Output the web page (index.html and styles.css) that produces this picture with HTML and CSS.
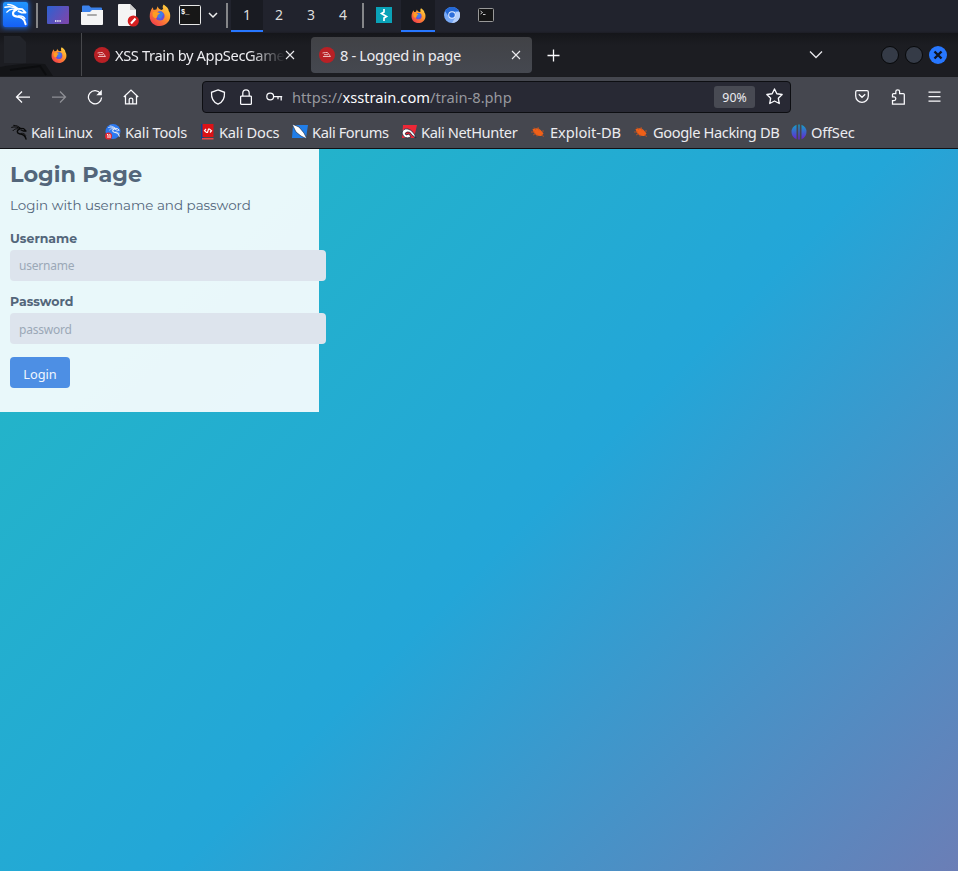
FILE: index.html
```html
<!DOCTYPE html>
<html lang="en">
<head>
<meta charset="utf-8">
<title>8 - Logged in page</title>
<link rel="stylesheet" href="styles.css">
</head>
<body>
<svg width="0" height="0" class="defs" aria-hidden="true">
  <defs>
    <linearGradient id="kali" x1="0" y1="0" x2="0" y2="1"><stop offset="0" stop-color="#2196ff"/><stop offset="1" stop-color="#1560f5"/></linearGradient>
    <linearGradient id="desk" x1="0" y1="0" x2="1" y2="0.6"><stop offset="0" stop-color="#2b62d2"/><stop offset="1" stop-color="#7748ae"/></linearGradient>
    <linearGradient id="fire" x1="1" y1="0" x2="0.2" y2="1"><stop offset="0" stop-color="#ffe14a"/><stop offset=".45" stop-color="#ff9a2b"/><stop offset="1" stop-color="#f23a4c"/></linearGradient>
    <linearGradient id="off" gradientUnits="userSpaceOnUse" x1="0" y1="0" x2="0" y2="16"><stop offset="0" stop-color="#12a5c8"/><stop offset="1" stop-color="#6a1fd0"/></linearGradient>
    <symbol id="dragon" viewBox="0 0 24 24">
      <g fill="none" stroke="currentColor" stroke-linecap="round" stroke-linejoin="round">
        <path stroke-width="1.500" d="M4 2C8 2 11 3.500 14 6M1 5C6 3.500 10 4.500 14 7M3 10C6 6.500 10 6.500 13 8"/>
        <path stroke-width="1.900" d="M13 6.500L19 7L22.500 10.500L18.500 10.500L15 9"/>
        <path stroke-width="2.200" d="M12 8C8.500 9.500 8.500 14 12.500 14.500C17 15 21.500 16 22.500 22.500"/>
        <path stroke-width="1.200" d="M15 14C19 13.500 21 15 22 17"/>
      </g>
    </symbol>
    <symbol id="firefox" viewBox="0 0 24 24">
      <path fill="url(#fire)" d="M16 .5C21 4 21.500 6 21.500 7.500C23 9 23.500 12 23 15C22 20 17.500 24 12 24C5.500 24 .8 19.500 .8 13.500C.8 9.500 2 6.500 4 3.500L5 6.500L8 6L9.500 2.500C10 4.500 11 5.500 13.500 6.500L15.500 5.500C14.500 3.500 15 2 16 .5Z"/>
      <circle cx="12" cy="13" r="5" fill="#6a4fd8"/>
      <path fill="#3d7fe8" d="M9 10L13 7.500L16 11L13 16L10 15Z"/>
      <path fill="#ff9d22" d="M4 9C7 7 9 9 12 10.300L9.500 12L9 14C8 17 5 15 4 13Z"/>
    </symbol>
    <symbol id="train" viewBox="0 0 16 16">
      <circle cx="8" cy="8" r="8" fill="#b92025"/>
      <path d="M3.500 6L6.500 5.500H8.500L11.500 9.500H4M5 7.700H9" fill="none" stroke="#ecb9ba"/>
    </symbol>
    <symbol id="bug" viewBox="0 0 16 16">
      <path d="M2.500 5L5 4.500L7 4.200C9.500 4.500 12 7 13.500 9.500L11.500 12C8 12.500 5 11 3.500 8Z" fill="#f06018"/>
      <path d="M1 8H5M3 11L6 9.500M4 3.500L6 6M8 3L9 6.500M12 7L14 7M7 10.500V12.500M11 11L14 12.500" fill="none" stroke="#c65320" stroke-width=".8"/>
    </symbol>
    <symbol id="x" viewBox="0 0 10 10"><path d="M1 1L9 9M9 1L1 9" fill="none" stroke="currentColor" stroke-width="1.100"/></symbol>
  </defs>
</svg>

<header class="panel">
  <span class="kali"><svg width="25" height="25" viewBox="0 0 26 26"><rect width="26" height="26" rx="2" fill="url(#kali)"/><use href="#dragon" x="1" y="0" width="24" height="25"/></svg></span>
  <i class="sep sep-1"></i>
  <svg class="desk" width="22" height="18" viewBox="0 0 22 18"><rect width="22" height="18" rx="1" fill="url(#desk)"/><path d="M8 15H14" stroke="#fff" stroke-width="1.600" stroke-dasharray="1.400 .8"/></svg>
  <svg class="folder" width="22" height="20" viewBox="0 0 22 20"><path d="M1 8V1.500Q1 .5 2 .5H8L10 2.500H20Q21 2.500 21 3.500V8Z" fill="#3b82ec"/><path d="M0 7H9L11 5H22V19Q22 20 21 20H1Q0 20 0 19Z" fill="#f4f4f4"/><rect x="6" y="9" width="10" height="2" rx="1" fill="#a9a9a9"/></svg>
  <svg class="note" width="21" height="23" viewBox="0 0 21 23"><path d="M1 0H12L18 6V22H1Q0 22 0 21V1Q0 0 1 0Z" fill="#f4f4f4"/><path d="M12 0L18 6H12Z" fill="#cfcfcf"/><circle cx="15.300" cy="17" r="5.600" fill="#d61f20"/><path d="M13 19.500L17.500 14.500" stroke="#fff" stroke-width="2"/></svg>
  <svg class="ff" width="22" height="22"><use href="#firefox"/></svg>
  <svg class="term" width="22" height="20" viewBox="0 0 22 20"><rect x=".5" y=".5" width="21" height="19" rx="1" fill="#171717" stroke="#e8e8e8"/><text x="2" y="9" class="prompt">$_</text></svg>
  <svg class="drop" width="10" height="8" viewBox="0 0 10 8"><path d="M1 2L5 6L9 2" fill="none" stroke="#eee" stroke-width="1.500"/></svg>
  <i class="sep sep-2"></i>
  <nav class="spaces"><span class="on">1</span><span>2</span><span>3</span><span>4</span></nav>
  <i class="sep sep-3"></i>
  <svg class="burp" width="16" height="16" viewBox="0 0 16 16"><rect width="16" height="16" fill="#0aa2b8"/><path d="M8 2V5L5.500 6.500L10.500 9.500L8 11V14" fill="none" stroke="#fff" stroke-width="1.700"/></svg>
  <span class="task"><svg width="15" height="15"><use href="#firefox"/></svg></span>
  <svg class="chromium" width="16" height="16" viewBox="0 0 16 16"><circle cx="8" cy="8" r="8" fill="#78aaf8"/><path d="M1 4A8 8 0 0 1 15 4L8 5L5 10Z" fill="#2468d5"/><path d="M15.500 5A8 8 0 0 1 8 16L12 9V5Z" fill="#b5cffb"/><circle cx="8" cy="8" r="3.800" fill="#e8f0ff"/><circle cx="8" cy="8" r="2.800" fill="#2d6edb"/></svg>
  <svg class="term-2" width="16" height="14" viewBox="0 0 16 14"><rect x=".5" y=".5" width="15" height="13" rx="1" fill="#151515" stroke="#999"/><path d="M2.500 3L4.500 4.500L2.500 6M5 6.500H7.500" fill="none" stroke="#ddd" stroke-width=".9"/></svg>
</header>

<div class="tabs">
  <div class="pinned">
    <svg class="ghost" width="81" height="43" viewBox="0 0 81 43"><path d="M4 3H20L26 9V30H4Z" fill="#22242a"/><path d="M0 34Q25 29 45 31L53 43H0Z" fill="#131417"/><path d="M10 37L40 33L46 42" fill="none" stroke="#0c0d0f" stroke-width="2"/></svg>
    <svg class="pin-icon" width="16" height="16"><use href="#firefox"/></svg>
  </div>
  <div class="tab"><svg width="16" height="16"><use href="#train"/></svg><span class="tab-title fade">XSS Train by AppSecGame</span><svg class="close" width="10" height="10"><use href="#x"/></svg></div>
  <div class="tab active"><svg width="16" height="16"><use href="#train"/></svg><span class="tab-title">8 - Logged in page</span><svg class="close" width="10" height="10"><use href="#x"/></svg></div>
  <svg class="plus" width="13" height="13" viewBox="0 0 13 13"><path d="M6.500 .5V12.500M.5 6.500H12.500" stroke="#fbfbfe" stroke-width="1.300"/></svg>
  <svg class="all-tabs" width="14" height="9" viewBox="0 0 14 9"><path d="M1 1.500L7 7.500L13 1.500" fill="none" stroke="#e8e8ec" stroke-width="1.300"/></svg>
  <div class="wm"><i></i><i></i><i class="wm-close"><svg width="10" height="10" viewBox="0 0 10 10"><path d="M1.500 1.500L8.500 8.500M8.500 1.500L1.500 8.500" stroke="#101522" stroke-width="2.400"/></svg></i></div>
</div>

<div class="toolbar">
  <svg class="nav back" width="16" height="16" viewBox="0 0 16 16"><path d="M15 8H1.500M7 2.500L1.500 8L7 13.500"/></svg>
  <svg class="nav fwd" width="16" height="16" viewBox="0 0 16 16"><path d="M1 8H14.500M9 2.500L14.500 8L9 13.500"/></svg>
  <svg class="nav reload" width="16" height="16" viewBox="0 0 16 16"><path d="M13.500 4.500A6.600 6.600 0 1 0 14.600 8.500"/><path class="solid" d="M14.800 .8V6.300H9.300Z"/></svg>
  <svg class="nav home" width="16" height="16" viewBox="0 0 16 16"><path d="M.8 8L8 1L15.200 8M2.500 7V14.800H13.500V7M6.200 14.500V10.500Q6.200 9.200 8 9.200T9.800 10.500V14.500"/></svg>
  <div class="url">
    <svg class="nav" width="16" height="16" viewBox="0 0 16 16"><path d="M8 .8L14.500 3.300C14.800 9 12.500 13.500 8 15.200C3.500 13.500 1.200 9 1.500 3.300Z"/></svg>
    <svg class="nav lock" width="12" height="16" viewBox="0 0 12 16"><path d="M1.500 7H10.500Q11.400 7 11.400 8V14.300Q11.400 15.300 10.500 15.300H1.500Q.6 15.300 .6 14.300V8Q.6 7 1.500 7ZM2.800 7V4A3.200 3.200 0 0 1 9.200 4V7"/></svg>
    <svg class="nav key" width="17" height="10" viewBox="0 0 17 10"><circle cx="4.200" cy="4.500" r="3.400"/><path d="M7.600 4.500H16.200M12 4.500V7.300M15.200 4.500V8.500"/></svg>
    <span class="addr">https://<b>xsstrain.com</b>/train-8.php</span>
    <span class="zoom">90%</span>
    <svg class="nav star" width="17" height="17" viewBox="0 0 16 16"><path stroke-linejoin="round" d="M8 .9L10.200 5.400L15.200 6.100L11.600 9.600L12.500 14.600L8 12.200L3.500 14.600L4.400 9.600L.8 6.100L5.800 5.400Z"/></svg>
  </div>
  <svg class="nav pocket" width="14" height="13" viewBox="0 0 14 13"><path d="M2 .7H12Q13.300 .7 13.300 2V6A6.300 6.300 0 0 1 .7 6V2Q.7 .7 2 .7ZM3.800 4.300L7 7.300L10.200 4.300"/></svg>
  <svg class="nav ext" width="14" height="16" viewBox="0 0 14 16"><path d="M4.800 4.500V2.500Q4.800 .8 6.700 .8T8.600 2.500V4.500H12.300Q13.300 4.500 13.300 5.500V15.200H1.500V11.500H3Q4.800 11.500 4.800 9.700T3 7.900H1.500V5.500Q1.500 4.500 2.500 4.500Z"/></svg>
  <svg class="nav menu" width="13" height="11" viewBox="0 0 13 11"><path d="M.5 1H12.500M.5 5.500H12.500M.5 10H12.500"/></svg>
</div>

<nav class="bookmarks">
  <a class="b1"><svg class="dark" width="16" height="16"><use href="#dragon"/></svg><span>Kali Linux</span></a>
  <a class="b2"><svg width="16" height="16" viewBox="0 0 16 16"><circle cx="8" cy="7.500" r="7.500" fill="#2b78f0"/><use href="#dragon" x="3" y="1" width="12" height="12"/><circle cx="3.500" cy="12" r="3.500" fill="#e32631"/><path d="M2 10.500H3V14M4.500 10.500H5V14" fill="none" stroke="#fff"/></svg><span>Kali Tools</span></a>
  <a class="b3"><svg width="13" height="16" viewBox="0 0 13 16"><path d="M0 0H3V15H0Z" fill="#123f8c"/><path d="M1.500 0H12.500V13H1.500Z" fill="#dc1216"/><path d="M1 14H12.500V15.500H1Z" fill="#f24848"/><path d="M5 5L3.500 6.700L5.500 8.500H6.500L7.500 5H8.500L10.500 6.700L9 8.500" fill="none" stroke="#fff" stroke-width="1.200"/></svg><span>Kali Docs</span></a>
  <a class="b4"><svg width="16" height="16" viewBox="0 0 16 16"><path d="M1 1H16L14 14H0Z" fill="#217ee8"/><path d="M0 0L7 3L12 9L15 15L9 12L4 8Z" fill="#fff" stroke="#182236" stroke-width=".6"/></svg><span>Kali Forums</span></a>
  <a class="b5"><svg width="16" height="16" viewBox="0 0 16 16"><path d="M2 1H16L13 14H1Z" fill="#ed2736"/><path d="M1 9Q2 4 7 5Q13 7 15 14L11 11Q9 7 6 8Q3 9 5 11L8 10L10 13Q3 16 1 9Z" fill="#fff" stroke="#182236" stroke-width=".8"/></svg><span>Kali NetHunter</span></a>
  <a class="b6"><svg width="16" height="16"><use href="#bug"/></svg><span>Exploit-DB</span></a>
  <a class="b7"><svg width="16" height="16"><use href="#bug"/></svg><span>Google Hacking DB</span></a>
  <a class="b8"><svg width="16" height="16" viewBox="0 0 16 16"><path fill="url(#off)" d="M5.500 .8V15.200A7.700 7.700 0 0 1 5.500 .8ZM7.300 .5H8.700V15.500H7.300ZM10.500 .8A7.700 7.700 0 0 1 10.500 15.200Z"/></svg><span>OffSec</span></a>
</nav>

<main class="page">
  <form class="card">
    <h1>Login Page</h1>
    <p>Login with username and password</p>
    <label for="u">Username</label>
    <input id="u" type="text" placeholder="username">
    <label for="p">Password</label>
    <input id="p" class="lower" type="password" placeholder="password">
    <button type="button">Login</button>
  </form>
</main>
</body>
</html>
```

FILE: styles.css
```css
* { box-sizing: border-box; }
body { margin: 0; height: 871px; overflow: hidden; display: flex; flex-direction: column; background: #191a1f; font-family: "Noto Sans", sans-serif; color: #ececf0; }
svg { display: block; flex: none; }
.defs { position: absolute; }

.panel { height: 33px; flex: none; display: flex; align-items: flex-start; background: linear-gradient(#21232d 0 31px, #1c1d25); }
.kali { margin: 2px 0 0 3px; color: #fff; box-shadow: 0 0 5px 1px #1c65d8; border-radius: 2px; }
.sep { width: 2px; height: 25px; margin-top: 3px; background: #858689; flex: none; }
.sep-1 { margin-left: 8px; }
.desk { margin: 6px 0 0 9px; }
.folder { margin: 5px 0 0 12px; }
.note { margin: 4px 0 0 15px; }
.ff { margin: 4px 0 0 10px; }
.term { margin: 5px 0 0 8px; }
.prompt { font: bold 7px "Liberation Mono", monospace; fill: #fff; }
.drop { margin: 11px 0 0 7px; }
.sep-2 { margin-left: 8px; }
.spaces { display: flex; width: 128px; margin-left: 3px; font-size: 14px; line-height: 30px; text-align: center; }
.spaces span { width: 32px; height: 32px; color: #ddd; flex: none; }
.spaces .on, .task { background: #191b22; border-bottom: 2px solid #2777ff; }
.sep-3 { margin-left: 3px; }
.burp { margin: 7px 0 0 12px; }
.task { width: 34px; height: 32px; margin-left: 9px; padding: 8px 0 0 10px; }
.chromium { margin: 7px 0 0 9px; }
.term-2 { margin: 8px 0 0 18px; }

.tabs { height: 43px; flex: none; display: flex; background: linear-gradient(#15161a, #1c1d22 12px); font-size: 14.670px; }
.pinned { position: relative; width: 82px; border-right: 1px solid #47484c; }
.ghost { position: absolute; left: 0; top: 0; }
.pin-icon { position: relative; margin: 14px 0 0 51px; }
.tab { display: flex; align-items: center; width: 221px; height: 36px; margin: 4px 0 0 4px; padding: 0 8px; border-radius: 4px; }
.tab + .tab { margin-left: 4px; }
.active { background: linear-gradient(#414246, #454850); }
.tab-title { flex: 1; margin-left: 5px; white-space: nowrap; letter-spacing: -.37px; }
.fade { flex: 0 0 168px; -webkit-mask-image: linear-gradient(90deg, #000 135px, transparent 170px); letter-spacing: -.38px; }
.close { margin-right: 3px; }
.fade + .close { margin-left: 3px; position: relative; left: -2px; }
.plus { margin: 16px 0 0 15px; }
.all-tabs { margin: 17px 0 0 249px; }
.wm { display: flex; gap: 6px; margin: 13px 0 0 58px; }
.wm i { width: 18px; height: 18px; border-radius: 50%; background: #353b47; border: 1px solid #07080a; }
.wm .wm-close { background: #2777ff; border: 0; padding: 4px; }

.toolbar { height: 40px; flex: none; display: flex; align-items: center; background: #45474f; border-top: 1px solid #1b1c20; }
.nav { fill: none; stroke: #fbfbfe; stroke-width: 1.250; }
.nav .solid { fill: #fbfbfe; stroke: none; }
.back { margin-left: 15px; }
.fwd { margin-left: 20px; opacity: .4; }
.reload { margin-left: 20px; }
.home { margin-left: 19.500px; }
.url { display: flex; align-items: center; width: 589px; height: 32px; margin-left: 63.500px; padding-left: 7px; background: #282934; border: 1px solid #0d0e12; border-radius: 4px; }
.lock { margin-left: 14px; }
.key { margin-left: 14px; }
.addr { width: 422px; margin-left: 9px; color: #97989e; font-size: 14.670px; white-space: nowrap; }
.addr b { color: #fbfbfe; font-weight: 400; }
.zoom { width: 41px; height: 22px; border-radius: 3px; background: #484a53; font-size: 12.300px; line-height: 23px; text-align: center; }
.star { margin-left: 11px; }
.pocket { margin-left: 64px; }
.ext { margin-left: 22px; }
.menu { margin-left: 22.500px; }

.bookmarks { height: 33px; flex: none; display: flex; align-items: center; padding: 0 0 0 11px; background: #45474f; border-bottom: 1px solid #101115; font-size: 14.670px; }
.bookmarks a { display: flex; align-items: center; gap: 4px; white-space: nowrap; }
.bookmarks span { letter-spacing: -.4px; }
.b1 { width: 94px; }
.bookmarks .b1 span { letter-spacing: -.48px; }
.dark { color: #090909; }
.b2 { width: 96px; }
.bookmarks .b2 span, .bookmarks .b3 span, .bookmarks .b8 span { letter-spacing: -.22px; }
.b3 { width: 91px; }
.b3 span { margin-left: 1px; }
.b4 { width: 109px; }
.b5 { width: 129px; }
.b6 { width: 103px; }
.bookmarks .b6 span { letter-spacing: -.05px; }
.b7 { width: 158px; }

.page { flex: 1; background: linear-gradient(135deg, #23b9c4 0%, #23a6d8 53.4%, #6b7eb6 100%); }
.card { width: 319px; height: 263px; padding: 11px 10px; background: rgba(255,255,255,.9); color: #53667a; font-family: Montserrat, "Open Sans", sans-serif; }
.card h1 { margin: 0; font-size: 22.400px; line-height: 28px; white-space: nowrap; }
.card p { margin: 6px 0 11px; font-size: 13.440px; line-height: 22px; white-space: nowrap; }
.card label { display: block; height: 23px; font-size: 12.500px; font-weight: 700; line-height: 23px; }
.card input { display: block; width: 316px; height: 31px; margin: 0 0 9px; padding: 0 9px; border: 0; border-radius: 4px; background: #dde4ed; font: 12px "Noto Sans", sans-serif; letter-spacing: -.2px; }
.card .lower { padding-top: 2px; }
.card input::placeholder { color: #9ba8b7; opacity: 1; }
.card button { display: block; width: 60px; height: 31px; margin-top: 13px; padding: 3px 0 0; border: 0; border-radius: 4px; background: #4d8fe4; color: #f0f6ff; font: 12.800px "Noto Sans", sans-serif; }
```
